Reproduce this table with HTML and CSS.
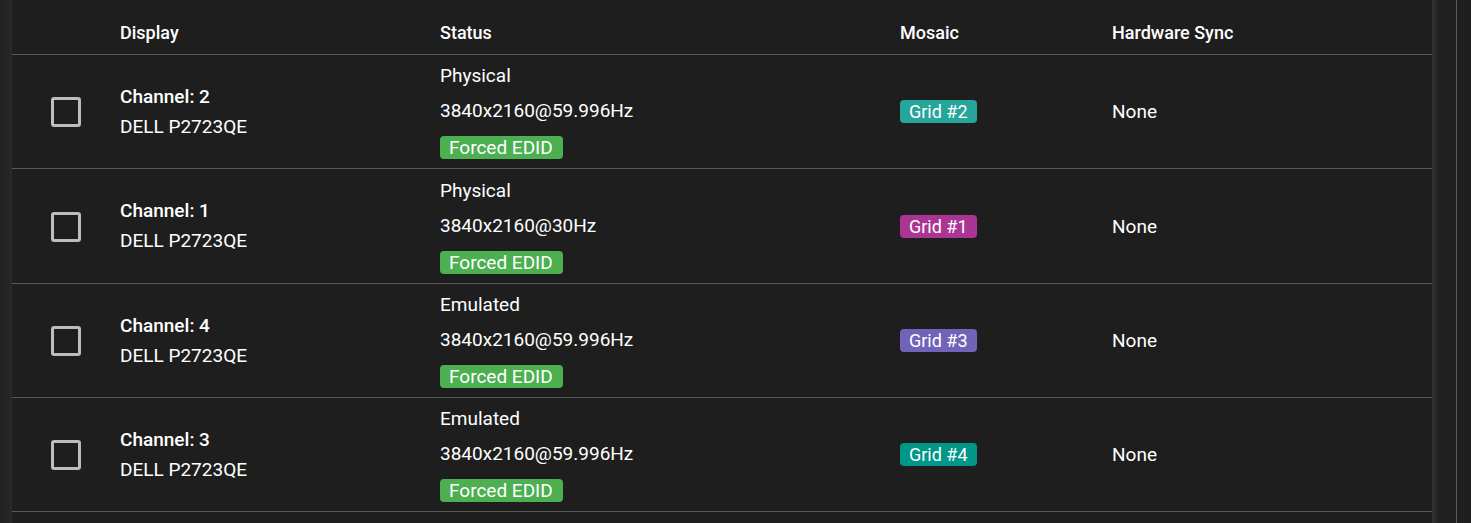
FILE: index.html
```html
<!DOCTYPE html>
<html>
<head>
<meta charset="utf-8">
<link rel="stylesheet" href="styles.css">
</head>
<body>
<div class="page">
  <div class="gutter-left"></div>
  <div class="table">
    <div class="row head">
      <div class="cell"></div>
      <div class="cell">Display</div>
      <div class="cell">Status</div>
      <div class="cell">Mosaic</div>
      <div class="cell">Hardware Sync</div>
    </div>
    <div class="row">
      <div class="cell check"><span class="box"></span></div>
      <div class="cell display"><span class="ch">Channel: 2</span><span>DELL P2723QE</span></div>
      <div class="cell status"><span>Physical</span><span>3840x2160@59.996Hz</span><span class="badge green">Forced EDID</span></div>
      <div class="cell"><span class="badge teal">Grid #2</span></div>
      <div class="cell">None</div>
    </div>
    <div class="row tall">
      <div class="cell check"><span class="box"></span></div>
      <div class="cell display"><span class="ch">Channel: 1</span><span>DELL P2723QE</span></div>
      <div class="cell status"><span>Physical</span><span>3840x2160@30Hz</span><span class="badge green">Forced EDID</span></div>
      <div class="cell"><span class="badge magenta">Grid #1</span></div>
      <div class="cell">None</div>
    </div>
    <div class="row">
      <div class="cell check"><span class="box"></span></div>
      <div class="cell display"><span class="ch">Channel: 4</span><span>DELL P2723QE</span></div>
      <div class="cell status"><span>Emulated</span><span>3840x2160@59.996Hz</span><span class="badge green">Forced EDID</span></div>
      <div class="cell"><span class="badge purple">Grid #3</span></div>
      <div class="cell">None</div>
    </div>
    <div class="row">
      <div class="cell check"><span class="box"></span></div>
      <div class="cell display"><span class="ch">Channel: 3</span><span>DELL P2723QE</span></div>
      <div class="cell status"><span>Emulated</span><span>3840x2160@59.996Hz</span><span class="badge green">Forced EDID</span></div>
      <div class="cell"><span class="badge darkteal">Grid #4</span></div>
      <div class="cell">None</div>
    </div>
  </div>
  <div class="shadow-right"></div>
  <div class="gutter-right"></div>
  <div class="rest"></div>
</div>
</body>
</html>
```
FILE: styles.css
```css
html, body {
  margin: 0;
  padding: 0;
  background: #1f1f1f;
  overflow: hidden;
  height: 523px;
}
body {
  font-family: Roboto, "Liberation Sans", sans-serif;
  color: #ffffff;
  font-size: 19px;
}
.page {
  display: flex;
  height: 523px;
}
.gutter-left {
  width: 11px;
  flex: none;
  background: linear-gradient(to right, #212121, #262626);
  border-right: 1px solid #2e2e2e;
}
.table {
  width: 1420px;
  flex: none;
  background: #1e1e1e;
}
.shadow-right {
  width: 6px;
  flex: none;
  background: linear-gradient(to right, #353535, #232323);
}
.gutter-right {
  width: 18px;
  flex: none;
  background: #202020;
  border-right: 1px solid #5c5c5c;
}
.rest {
  flex: 1;
  background: #1f1f1f;
}
.row {
  display: grid;
  grid-template-columns: 108px 320px 460px 212px 1fr;
  height: 113px;
  border-bottom: 1px solid #575757;
}
.row.tall {
  height: 114px;
}
.row.head {
  height: 54px;
  font-weight: 500;
  font-size: 18px;
}
.row.head .cell {
  padding-top: 10px;
}
.cell {
  display: flex;
  flex-direction: column;
  justify-content: center;
  align-items: flex-start;
}
.check {
  padding-left: 39px;
}
.box {
  width: 24px;
  height: 24px;
  border: 3px solid #bdbdbd;
  border-radius: 3px;
  margin-top: 1px;
}
.display {
  gap: 8px;
  line-height: 22px;
}
.display .ch {
  font-weight: 500;
}
.status {
  line-height: 24px;
}
.status span + span {
  margin-top: 11px;
}
.status .badge {
  margin-top: 13px;
}
.badge {
  display: inline-block;
  height: 23px;
  line-height: 23px;
  padding: 0 9px;
  border-radius: 4px;
  font-size: 18px;
}
.badge.green {
  font-size: 19px;
  padding: 0 10px 0 9px;
}
.green { background: #4caf50; }
.teal { background: #26a69a; }
.darkteal { background: #009688; }
.magenta { background: #ab3592; }
.purple { background: #7063b8; }
```
